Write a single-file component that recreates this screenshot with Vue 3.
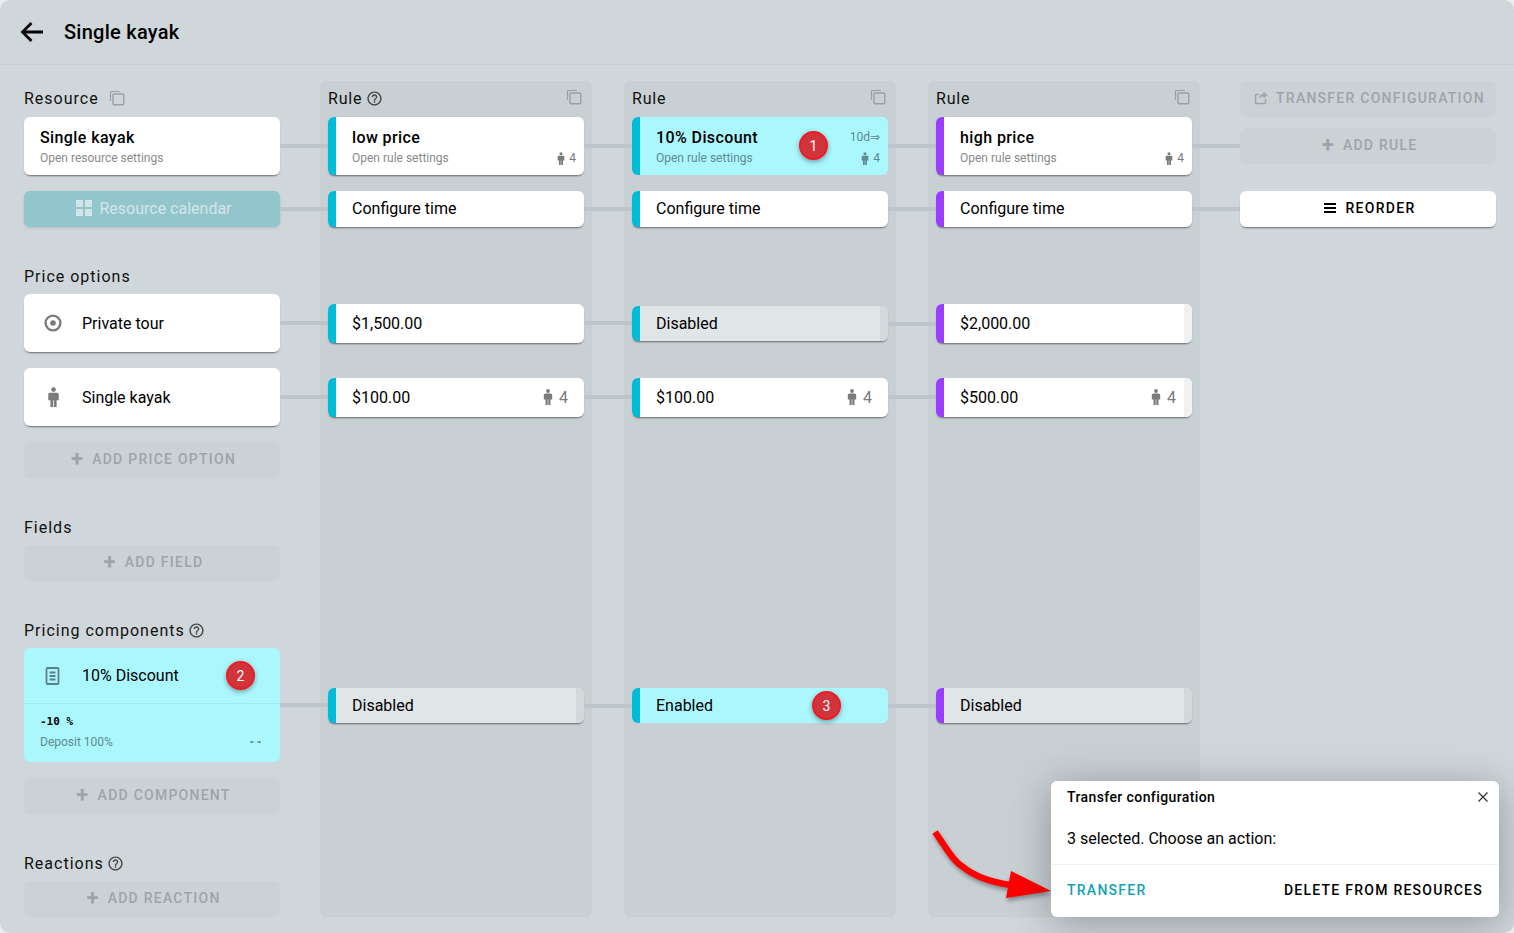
<script setup>
const helpPath =
  "M11 18h2v-2h-2v2zm1-16C6.48 2 2 6.48 2 12s4.48 10 10 10 10-4.48 10-10S17.52 2 12 2zm0 18c-4.41 0-8-3.59-8-8s3.59-8 8-8 8 3.59 8 8-3.59 8-8 8zm0-14c-2.21 0-4 1.79-4 4h2c0-1.1.9-2 2-2s2 .9 2 2c0 2-3 1.75-3 5h2c0-2.25 3-2.5 3-5 0-2.21-1.79-4-4-4z";
const personPath =
  "M2.3 4.5h5.4A1.5 1.5 0 0 1 9.2 6v4.5H7.500V16H5.300v-5.500h-.6V16H2.500v-5.500H.8V6a1.500 1.500 0 0 1 1.500-1.500z";

const rules = [
  {
    name: "low price", help: true, accent: "cyan",
    cells: [
      { text: "$1,500.00", tall: true },
      { text: "$100.00", people: 4 },
    ],
    component: { text: "Disabled", off: true },
  },
  {
    name: "10% Discount", accent: "cyan", selected: true, badge: 1, days: "10d⇒",
    cells: [
      { text: "Disabled", off: true },
      { text: "$100.00", people: 4 },
    ],
    component: { text: "Enabled", selected: true, badge: 3 },
  },
  {
    name: "high price", accent: "purple", last: true,
    cells: [
      { text: "$2,000.00", tall: true, strip: true },
      { text: "$500.00", people: 4, strip: true },
    ],
    component: { text: "Disabled", off: true },
  },
];
</script>

<template>
  <div class="page">
    <header class="topbar">
      <svg class="back" width="24" height="22" viewBox="0 0 24 22">
        <path d="M23 11H3M11.5 2 2.5 11l9 9" fill="none" stroke="#000" stroke-width="2.8" />
      </svg>
      <h1>Single kayak</h1>
    </header>

    <main class="board">
      <section class="col-left">
        <div class="label">
          Resource
          <svg class="copy after-label" width="16" height="16" viewBox="0 0 16 16">
            <path d="M1.500 11V2.500a1 1 0 0 1 1-1H11" fill="none" stroke="#9aa0a3" stroke-width="1.2" />
            <rect x="4" y="4" width="10.8" height="10.8" rx="1" fill="none" stroke="#9aa0a3" stroke-width="1.4" />
          </svg>
        </div>
        <div class="card big line">
          <b>Single kayak</b>
          <small>Open resource settings</small>
        </div>
        <div class="calendar line">
          <svg width="16" height="16" viewBox="0 0 16 16" fill="#d2e6ea">
            <rect width="7" height="7" /><rect x="9" width="7" height="7" />
            <rect y="9" width="7" height="7" /><rect x="9" y="9" width="7" height="7" />
          </svg>
          Resource calendar
        </div>

        <div class="label spaced">Price options</div>
        <div class="card option line">
          <span class="lead">
            <svg width="18" height="18" viewBox="0 0 18 18">
              <circle cx="9" cy="9" r="7.4" fill="none" stroke="#7b7b7b" stroke-width="2.4" />
              <circle cx="9" cy="9" r="2.8" fill="#7b7b7b" />
            </svg>
          </span>
          Private tour
        </div>
        <div class="card option line gap-top">
          <span class="lead">
            <svg width="13" height="20" viewBox="0 0 10 16" fill="#7b7b7b">
              <circle cx="5" cy="2" r="1.9" />
              <path :d="personPath" />
            </svg>
          </span>
          Single kayak
        </div>
        <button class="ghost gap-top"><span class="plus">+</span>ADD PRICE OPTION</button>

        <div class="label spaced">Fields</div>
        <button class="ghost"><span class="plus">+</span>ADD FIELD</button>

        <div class="label spaced">
          Pricing components
          <svg class="help" width="17" height="17" viewBox="0 0 24 24" fill="#444"><path :d="helpPath" /></svg>
        </div>
        <div class="component">
          <div class="component-top">
            <span class="lead">
              <svg width="18" height="18" viewBox="0 0 18 18" fill="none" stroke="#5c8087" stroke-width="1.8">
                <rect x="2.5" y="1" width="12" height="16" rx="1" />
                <path d="M5.500 5.500h6M5.500 9h6M5.500 12.500h6" />
              </svg>
            </span>
            10% Discount
            <span class="badge comp-badge">2</span>
          </div>
          <div class="component-body">
            <code>-10 %</code>
            <div class="component-foot">
              <small>Deposit 100%</small>
              <svg class="swap" width="11" height="6" viewBox="0 0 11 6" fill="none" stroke="#5c8087">
                <path d="M0 3h4M2 2 1 3l1 1M7 3h4M9 2l1 1-1 1" />
              </svg>
            </div>
          </div>
        </div>
        <button class="ghost gap-top"><span class="plus">+</span>ADD COMPONENT</button>

        <div class="label spaced">
          Reactions
          <svg class="help" width="17" height="17" viewBox="0 0 24 24" fill="#444"><path :d="helpPath" /></svg>
        </div>
        <button class="ghost"><span class="plus">+</span>ADD REACTION</button>
      </section>

      <section v-for="rule in rules" :key="rule.name" class="col-rule" :class="rule.accent">
        <div class="rule-head">
          <span class="label-text">Rule</span>
          <svg v-if="rule.help" class="help" width="17" height="17" viewBox="0 0 24 24" fill="#444"><path :d="helpPath" /></svg>
          <svg class="copy head-copy" width="16" height="16" viewBox="0 0 16 16">
            <path d="M1.500 11V2.500a1 1 0 0 1 1-1H11" fill="none" stroke="#9aa0a3" stroke-width="1.2" />
            <rect x="4" y="4" width="10.8" height="10.8" rx="1" fill="none" stroke="#9aa0a3" stroke-width="1.4" />
          </svg>
        </div>

        <div class="cell rule-card" :class="{ selected: rule.selected }">
          <b>{{ rule.name }}</b>
          <small>Open rule settings</small>
          <span v-if="rule.days" class="days">{{ rule.days }}</span>
          <span class="people small">
            <svg width="8" height="13" viewBox="0 0 10 16" fill="currentColor">
              <circle cx="5" cy="2" r="1.9" />
              <path :d="personPath" />
            </svg>
            4
          </span>
          <span v-if="rule.badge" class="badge rule-badge">{{ rule.badge }}</span>
        </div>

        <div class="cell time">Configure time</div>

        <div
          v-for="(cell, i) in rule.cells"
          :key="i"
          class="slot"
          :class="{ first: i === 0 }"
        >
          <div class="cell price" :class="{ off: cell.off, strip: cell.strip, 'no-line': rule.last }">
            {{ cell.text }}
            <span v-if="cell.people" class="people">
              <svg width="10" height="16" viewBox="0 0 10 16" fill="currentColor">
                <circle cx="5" cy="2" r="1.9" />
                <path :d="personPath" />
              </svg>
              {{ cell.people }}
            </span>
          </div>
        </div>

        <div
          class="cell comp"
          :class="{ off: rule.component.off, selected: rule.component.selected, 'no-line': rule.last }"
        >
          {{ rule.component.text }}
          <span v-if="rule.component.badge" class="badge cell-badge">{{ rule.component.badge }}</span>
        </div>
      </section>

      <section class="col-right">
        <button class="ghost wide">
          <svg width="14" height="14" viewBox="0 0 14 14" fill="none" stroke="#9ea4a8" stroke-width="1.6">
            <path d="M11.500 8v3.500a1 1 0 0 1-1 1h-8a1 1 0 0 1-1-1v-7a1 1 0 0 1 1-1H5" />
            <path d="M13.500 4 9.500.8v2.100C7 3 5 4.500 4.500 7.500 6 6 7.500 5.400 9.500 5.400v2z" fill="#9ea4a8" stroke="none" />
          </svg>
          TRANSFER CONFIGURATION
        </button>
        <button class="ghost add-rule"><span class="plus">+</span>ADD RULE</button>
        <button class="reorder">
          <svg width="12" height="10" viewBox="0 0 12 10" fill="#000">
            <rect width="12" height="2" /><rect y="4" width="12" height="2" /><rect y="8" width="12" height="2" />
          </svg>
          REORDER
        </button>
      </section>
    </main>

    <svg class="red-arrow" width="130" height="80" viewBox="0 0 130 80">
      <path d="M5 4C17 21 23 33 33 39 43 47 60 54 80 57" fill="none" stroke="#f00" stroke-width="6.5" />
      <path d="M81 43 121 63 76 70z" fill="#f00" />
    </svg>

    <aside class="toast">
      <div class="toast-title">
        Transfer configuration
        <svg width="10" height="10" viewBox="0 0 10 10" stroke="#333" stroke-width="1.2">
          <path d="M.5.500l9 9M9.500.5l-9 9" />
        </svg>
      </div>
      <p>3 selected. Choose an action:</p>
      <div class="toast-actions">
        <button class="transfer">TRANSFER</button>
        <button class="delete">DELETE FROM RESOURCES</button>
      </div>
    </aside>
  </div>
</template>

<style>
html,
body {
  margin: 0;
  height: 100%;
  overflow: hidden;
  background: #e9edef;
}
</style>

<style scoped>
.page {
  position: relative;
  height: 933px;
  overflow: hidden;
  background: #d0d7db;
  border-radius: 10px;
  font-family: Roboto, sans-serif;
  color: #000;
}

.topbar {
  display: flex;
  align-items: center;
  gap: 20px;
  height: 64px;
  padding-left: 20px;
  border-bottom: 1px solid #c7cfd3;
}

.topbar h1 {
  margin: 0;
  font-size: 20px;
  font-weight: 500;
  letter-spacing: 0.25px;
}

.board {
  display: flex;
  height: 836px;
  padding: 16px 0 0 24px;
}

.col-left,
.col-right {
  display: flex;
  flex-direction: column;
  flex: none;
  width: 256px;
}

.col-left {
  margin-right: 40px;
}

.col-right {
  margin-left: 8px;
}

.col-rule {
  flex: none;
  width: 256px;
  margin-right: 32px;
  padding: 0 8px;
  background: #c9d0d4;
  border-radius: 6px;
  display: flex;
  flex-direction: column;
}

.col-rule.cyan {
  --accent: #00bcd9;
}

.col-rule.purple {
  --accent: #9a3dff;
}

.label,
.label-text {
  font-size: 16px;
  letter-spacing: 1px;
  color: #111;
}

.label-text {
  letter-spacing: 0.8px;
}

.label {
  display: flex;
  align-items: center;
  height: 34px;
  margin-bottom: 2px;
  flex: none;
}

.label.spaced {
  margin-top: 32px;
  margin-bottom: 1px;
}

.label .help {
  margin-left: 3px;
}

.after-label {
  margin-left: 10px;
}

.help {
  margin-left: 4px;
}

.rule-head {
  display: flex;
  align-items: center;
  height: 34px;
  margin-bottom: 2px;
  flex: none;
}

.head-copy {
  margin-left: auto;
  margin-right: 2px;
  margin-top: -2px;
}

small {
  font-size: 12px;
  color: #8a8a8a;
  display: block;
}

b {
  font-size: 16px;
  font-weight: 500;
  letter-spacing: 0.4px;
  display: block;
}

.card {
  position: relative;
  background: #fff;
  border-radius: 6px;
  box-shadow: 0 2px 2px -1px rgba(0, 0, 0, 0.5);
  flex: none;
  box-sizing: border-box;
}

.big {
  height: 58px;
  padding: 11px 16px;
}

.big small {
  margin-top: 4px;
}

.option {
  display: flex;
  align-items: center;
  height: 58px;
  font-size: 16px;
}

.lead {
  display: flex;
  justify-content: center;
  flex: none;
  width: 58px;
}

.gap-top {
  margin-top: 16px;
}

/* connector lines between a card and the next column */
.line::after,
.cell:not(.no-line)::after {
  content: "";
  position: absolute;
  top: 50%;
  left: 100%;
  width: 48px;
  height: 4px;
  margin-top: -2px;
  background: #bcc5c9;
}

.calendar {
  position: relative;
  display: flex;
  align-items: center;
  justify-content: center;
  gap: 7px;
  height: 36px;
  padding: 0 0 2px 4px;
  margin-top: 16px;
  flex: none;
  box-sizing: border-box;
  background: #92c5cc;
  border-radius: 6px;
  color: #d2e6ea;
  font-size: 16px;
  box-shadow: 0 1px 3px rgba(0, 0, 0, 0.12);
}

.ghost {
  display: flex;
  align-items: center;
  justify-content: center;
  gap: 8px;
  height: 36px;
  padding: 0 0 2px 3px;
  flex: none;
  box-sizing: border-box;
  border: 0;
  border-radius: 6px;
  background: #cbd2d6;
  color: #9ea4a8;
  font: 500 14px Roboto, sans-serif;
  letter-spacing: 1.25px;
}

.plus {
  font-size: 22px;
  font-weight: 700;
  line-height: 1;
  margin-top: -1px;
}

.component {
  position: relative;
  height: 114px;
  flex: none;
  background: #aaf7fe;
  border-radius: 6px;
  box-sizing: border-box;
}

.component::after {
  content: "";
  position: absolute;
  top: 55px;
  left: 100%;
  width: 48px;
  height: 4px;
  background: #bcc5c9;
}

.component-top {
  position: relative;
  display: flex;
  align-items: center;
  height: 55px;
  font-size: 16px;
  border-bottom: 1px solid #9eeaf2;
}

.component-body {
  padding: 10px 16px;
}

code {
  font: bold 11px "DejaVu Sans Mono", monospace;
  display: block;
  margin-top: 1px;
}

.component-foot {
  display: flex;
  justify-content: space-between;
  align-items: center;
  margin-top: 7px;
}

.component-foot small {
  color: #5f8a90;
}

.swap {
  margin-right: 3px;
}

.badge {
  position: absolute;
  display: flex;
  align-items: center;
  justify-content: center;
  width: 29px;
  height: 29px;
  box-sizing: border-box;
  border-radius: 50%;
  border: 2px solid #ee1c25;
  background: #d2343c;
  color: #fff;
  font-size: 14px;
  box-shadow: 0 2px 5px rgba(0, 0, 0, 0.35);
}

.comp-badge {
  left: 202px;
  top: 13px;
}

.rule-badge {
  left: 159px;
  top: 14px;
}

.cell-badge {
  left: 172px;
  top: 3px;
}

.cell {
  position: relative;
  flex: none;
  box-sizing: border-box;
  background: #fff;
  border-left: 8px solid var(--accent);
  border-radius: 6px;
  font-size: 16px;
  box-shadow: 0 2px 2px -1px rgba(0, 0, 0, 0.5);
}

.cell.selected {
  background: #aaf7fe;
  box-shadow: none;
}

.rule-card {
  height: 58px;
  padding: 11px 16px;
}

.rule-card small {
  margin-top: 4px;
}

.rule-card.selected small {
  color: #5f8a90;
}

.time {
  display: flex;
  align-items: center;
  height: 36px;
  margin-top: 16px;
  padding: 0 0 2px 16px;
}

.slot {
  display: flex;
  align-items: center;
  height: 58px;
  margin-top: 16px;
  flex: none;
}

.slot.first {
  margin-top: 67px;
}

.price {
  display: flex;
  align-items: center;
  justify-content: space-between;
  width: 100%;
  height: 39px;
  padding: 0 16px;
}

.price.off {
  height: 35px;
  margin-top: 1px;
}

.off {
  background: #e0e5e8;
}

.off::before,
.strip::before {
  content: "";
  position: absolute;
  top: 0;
  right: 0;
  bottom: 0;
  width: 8px;
  background: #d3d8db;
  border-radius: 0 6px 6px 0;
}

.strip::before {
  background: #f0f1f2;
}

.comp {
  display: flex;
  align-items: center;
  height: 35px;
  margin-top: 262px;
  padding-left: 16px;
}

.people {
  display: inline-flex;
  align-items: center;
  gap: 6px;
  color: #7b7b7b;
}

.people.small {
  position: absolute;
  right: 8px;
  bottom: 10px;
  gap: 4px;
  font-size: 12px;
  line-height: 14px;
}

.selected .people,
.days {
  color: #5f8a90;
}

.days {
  position: absolute;
  top: 13px;
  right: 8px;
  font: 12px Roboto, "DejaVu Sans", sans-serif;
}

.add-rule {
  margin-top: 11px;
}

.reorder {
  position: relative;
  display: flex;
  align-items: center;
  justify-content: center;
  gap: 9px;
  height: 36px;
  margin-top: 27px;
  border: 0;
  padding: 0 0 2px 4px;
  box-sizing: border-box;
  border-radius: 6px;
  background: #fff;
  font: 500 14px Roboto, sans-serif;
  letter-spacing: 1.3px;
  box-shadow: 0 2px 2px -1px rgba(0, 0, 0, 0.5);
}

.red-arrow {
  position: absolute;
  left: 930px;
  top: 828px;
  filter: drop-shadow(1px 3px 2px rgba(0, 0, 0, 0.35));
}

.toast {
  position: absolute;
  left: 1051px;
  top: 781px;
  width: 448px;
  height: 136px;
  background: #fff;
  border-radius: 6px;
  box-shadow: 0 6px 40px rgba(0, 0, 0, 0.3);
}

.toast-title {
  display: flex;
  justify-content: space-between;
  align-items: center;
  padding: 8px 11px 0 16px;
  font-size: 14px;
  font-weight: 500;
  letter-spacing: 0.4px;
  line-height: 16px;
}

.toast p {
  margin: 0;
  padding: 25px 16px 16px;
  font-size: 16px;
  line-height: 18px;
  border-bottom: 1px solid #eef0f1;
}

.toast-actions {
  display: flex;
  justify-content: space-between;
  padding: 16px;
}

.toast-actions button {
  padding: 0;
  border: 0;
  background: none;
  font: 500 14px/18px Roboto, sans-serif;
  letter-spacing: 1.25px;
}

.transfer {
  color: #11a3b3;
}
</style>
